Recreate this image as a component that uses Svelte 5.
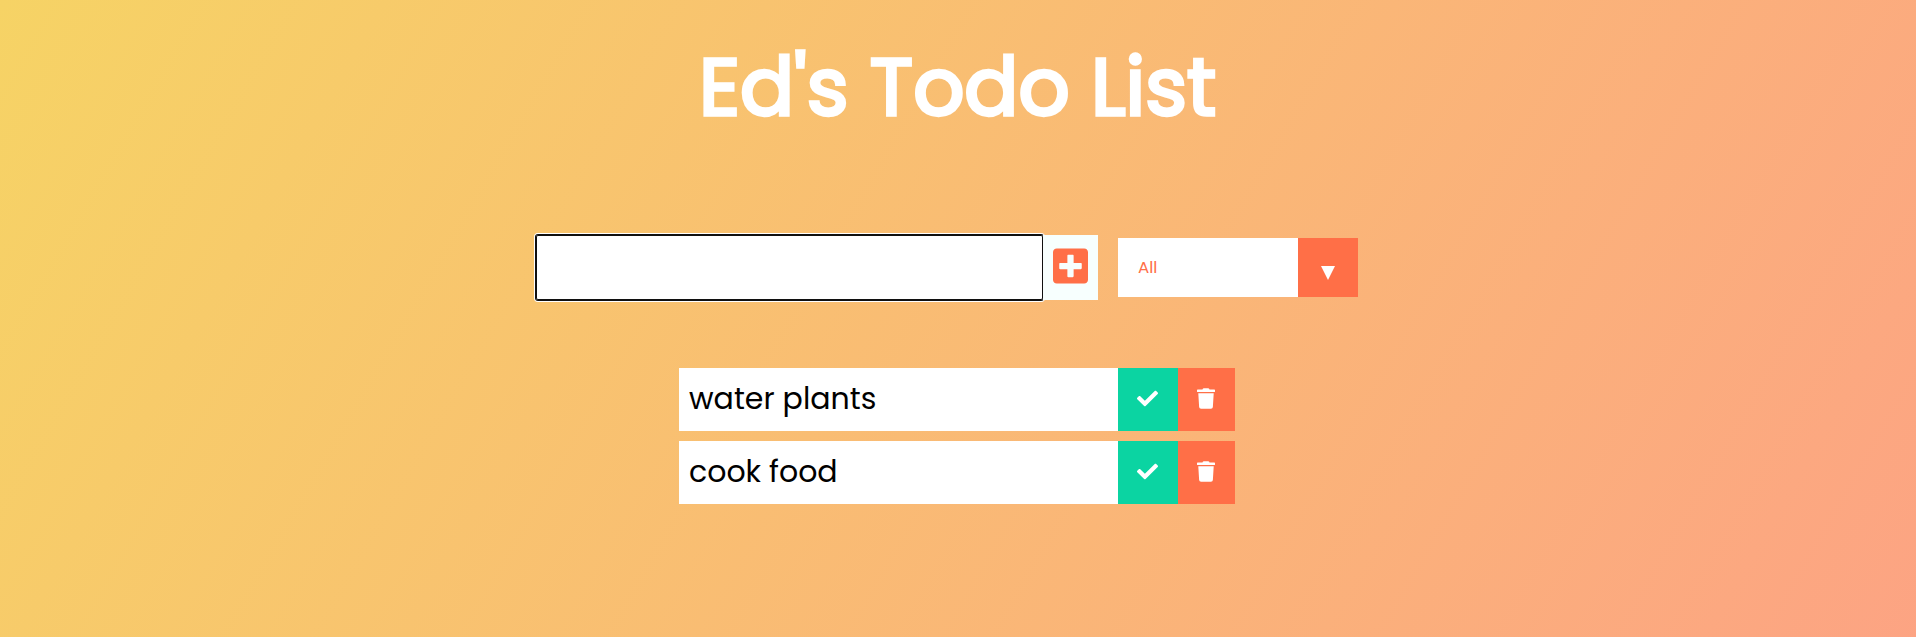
<script>
  let text = $state('');
  let todos = $state([{ name: 'water plants' }, { name: 'cook food' }]);
</script>

<div class="page">
  <header>
    <h1>Ed's Todo List</h1>
  </header>

  <form onsubmit={(e) => e.preventDefault()}>
    <input class="todo-input" type="text" aria-label="Todo" bind:value={text} />
    <button class="add" aria-label="Add">
      <svg viewBox="0 0 448 512" width="35" height="40"><path fill="currentColor" d="M400 32H48C21.500 32 0 53.500 0 80v352c0 26.500 21.500 48 48 48h352c26.500 0 48-21.500 48-48V80c0-26.500-21.500-48-48-48zm-32 252c0 6.600-5.400 12-12 12h-92v92c0 6.600-5.400 12-12 12h-56c-6.600 0-12-5.400-12-12v-92H92c-6.600 0-12-5.400-12-12v-56c0-6.600 5.400-12 12-12h92v-92c0-6.600 5.400-12 12-12h56c6.600 0 12 5.400 12 12v92h92c6.600 0 12 5.400 12 12v56z" /></svg>
    </button>
    <div class="select">
      <span class="value">All</span>
      <span class="arrow"><svg viewBox="0 0 14 14" width="14" height="14"><path fill="#fff" d="M0 0h14L7 14z" /></svg></span>
    </div>
  </form>

  <ul>
    {#each todos as todo}
      <li>
        <span class="name">{todo.name}</span>
        <button class="done" aria-label="Complete"><svg viewBox="0 0 512 512" width="21" height="21"><path fill="currentColor" d="M173.898 439.404l-166.400-166.400c-9.997-9.997-9.997-26.206 0-36.204l36.203-36.204c9.997-9.998 26.207-9.998 36.204 0L192 312.690 432.095 72.596c9.997-9.997 26.207-9.997 36.204 0l36.203 36.204c9.997 9.997 9.997 26.206 0 36.204l-294.400 294.401c-9.998 9.997-26.207 9.997-36.204-.001z" /></svg></button>
        <button class="trash" aria-label="Delete"><svg viewBox="0 0 448 512" width="18" height="21"><path fill="currentColor" d="M432 32H312l-9.400-18.700A24 24 0 0 0 281.100 0H166.800a23.720 23.720 0 0 0-21.400 13.300L136 32H16A16 16 0 0 0 0 48v32a16 16 0 0 0 16 16h416a16 16 0 0 0 16-16V48a16 16 0 0 0-16-16zM53.200 467a48 48 0 0 0 47.900 45h245.800a48 48 0 0 0 47.900-45L416 128H32z" /></svg></button>
      </li>
    {/each}
  </ul>
</div>

<style>
  :global(body) {
    margin: 0;
  }
  .page {
    box-sizing: border-box;
    height: 637px;
    background: linear-gradient(120deg, #f6d365, #fda085) 0 0 / 100% 937px no-repeat;
    font-family: Poppins, Inter, sans-serif;
    overflow: hidden;
  }
  header {
    height: 235px;
    box-sizing: border-box;
  }
  h1 {
    margin: 0;
    padding: 37px 1px 0 0;
    color: #fff;
    font-size: 80px;
    font-weight: 400;
    line-height: 100px;
    text-align: center;
    white-space: nowrap;
    -webkit-text-stroke: 3.4px #fff;
  }
  form {
    display: flex;
    align-items: center;
    height: 65px;
    padding-left: 536px;
  }
  .todo-input {
    box-sizing: border-box;
    width: 507px;
    height: 65px;
    padding: 8px;
    border: 0;
    border-radius: 2px;
    outline: 0;
    background: #fff;
    box-shadow: inset 0 0 0 1px #101010, 0 0 0 1px #101010, 0 0 0 2px #fff;
    font: 30px Poppins, Inter, sans-serif;
  }
  button {
    display: flex;
    align-items: center;
    justify-content: center;
    padding: 0 0 2px;
    border: 0;
    color: #fff;
  }
  .add {
    position: relative;
    width: 55px;
    height: 65px;
    padding-bottom: 3px;
    background: #f7fffe;
    color: #ff6f47;
  }
  .select {
    display: flex;
    width: 240px;
    height: 59px;
    margin-left: 20px;
    background: #fff;
    color: #ff6f47;
  }
  .value {
    flex: 1;
    padding-left: 20px;
    font-size: 16.667px;
    font-weight: 400;
    line-height: 59px;
  }
  .arrow {
    display: flex;
    align-items: center;
    justify-content: center;
    width: 60px;
    padding-top: 11px;
    box-sizing: border-box;
    background: #ff6f47;
  }
  ul {
    display: flex;
    flex-direction: column;
    gap: 10px;
    width: 556px;
    margin: 68px 0 0 679px;
    padding: 0;
    list-style: none;
  }
  li {
    display: flex;
    height: 63px;
    background: #fff;
    color: #000;
  }
  .name {
    flex: 1;
    padding-left: 10px;
    font-size: 30px;
    line-height: 62px;
  }
  .done {
    width: 60px;
    padding-right: 1px;
    background: #0bd4a2;
  }
  .trash {
    width: 57px;
    padding-right: 1px;
    background: #ff6f47;
  }
</style>
